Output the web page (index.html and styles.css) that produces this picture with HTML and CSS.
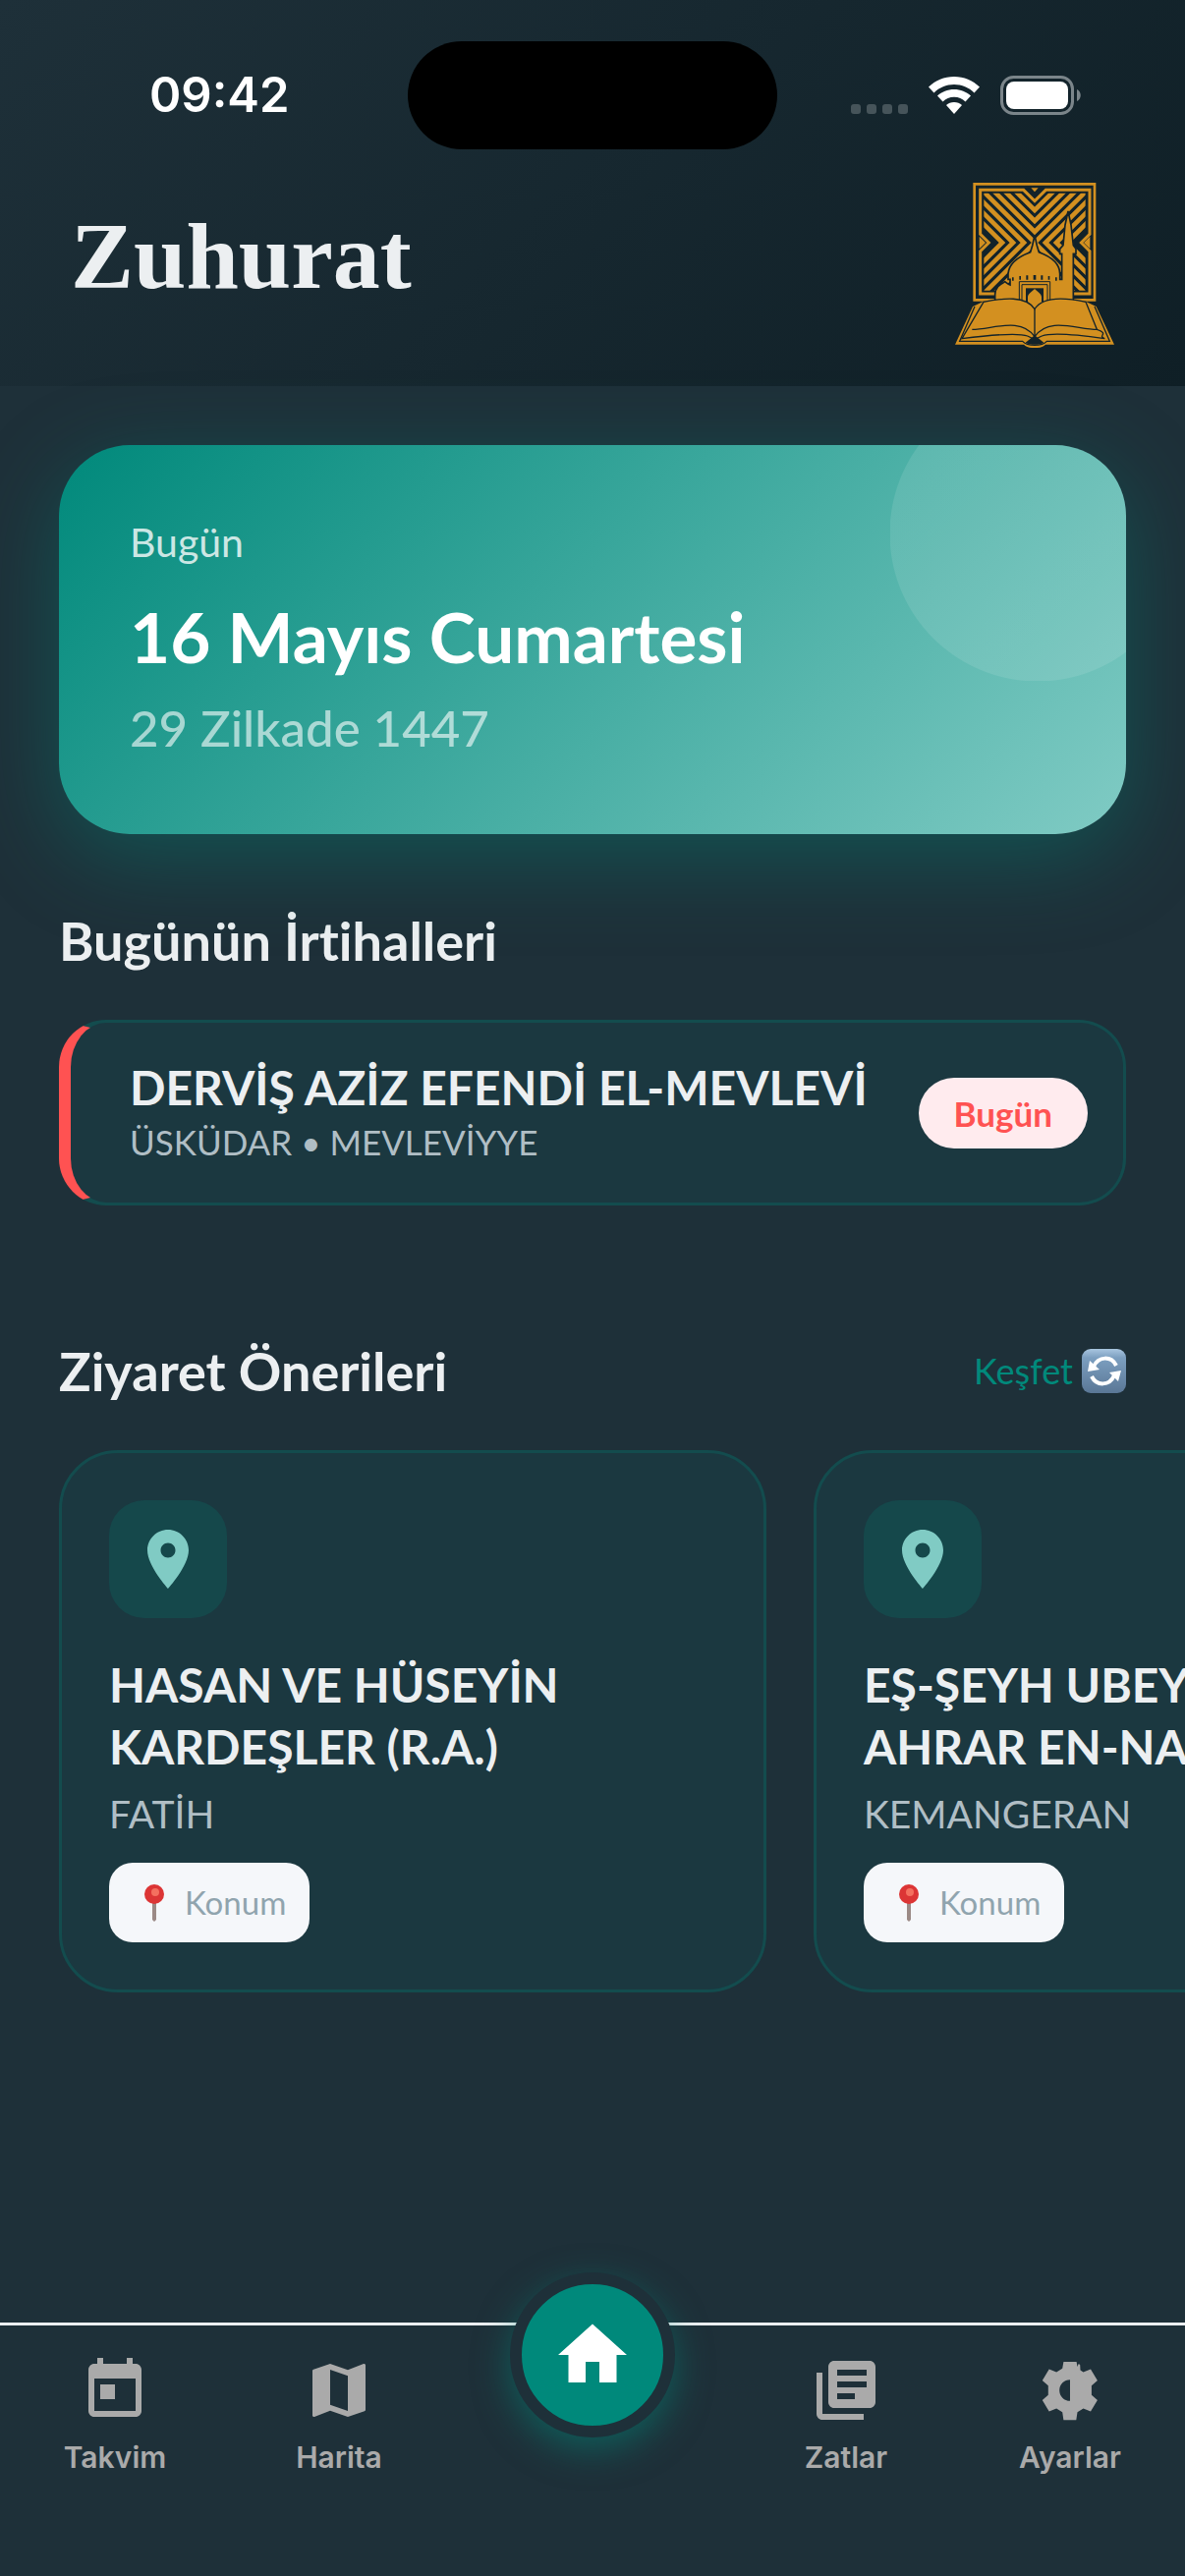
FILE: index.html
```html
<!DOCTYPE html>
<html lang="tr">
<head>
  <meta charset="UTF-8">
  <meta name="viewport" content="width=device-width, initial-scale=1">
  <title>Zuhurat</title>
  <link rel="stylesheet" href="styles.css">
</head>
<body>

<header class="header">
  <div class="status">
    <span class="time">09:42</span>
    <span class="island"></span>
    <div class="status-icons">
      <svg class="dots" viewBox="0 0 58 10" width="58" height="10">
        <rect width="10" height="10" rx="3"/>
        <rect x="16" width="10" height="10" rx="3"/>
        <rect x="32" width="10" height="10" rx="3"/>
        <rect x="48" width="10" height="10" rx="3"/>
      </svg>
      <svg class="wifi" viewBox="0 0 52 38" width="52" height="38">
        <path d="M26 0C16 0 7 4 0 10.500l5.500 6C11 11 18 8 26 8s15 3 20.500 8.500l5.500-6C45 4 36 0 26 0z"/>
        <path d="M26 13c-6.500 0-12.500 2.500-17 6.500l5.500 6c3-3 7-4.700 11.500-4.700s8.500 1.700 11.500 4.700l5.500-6C38.500 15.500 32.500 13 26 13z"/>
        <path d="M26 26c-3 0-6 1-8 3l8 9 8-9c-2-2-5-3-8-3z"/>
      </svg>
      <svg viewBox="0 0 82 40" width="82" height="40">
        <rect x="1.500" y="1.500" width="72" height="37" rx="12" fill="none" stroke="#7b858a" stroke-width="3"/>
        <rect x="6" y="6" width="63" height="28" rx="8" fill="#fff"/>
        <path d="M78 14c5 2 5 10 0 12z" fill="#7b858a"/>
      </svg>
    </div>
  </div>
  <div class="title-bar">
    <h1>Zuhurat</h1>
    <svg class="logo" viewBox="66 48 486 504" width="162" height="168">
      <defs>
        <clipPath id="inner"><path d="M154 80h310v297H154z"/></clipPath>
      </defs>
      <!-- frame -->
      <g fill="none" stroke="#d39020">
        <path stroke-width="8" d="M125 52h367v354H125z"/>
        <path stroke-width="9" d="M190 387H143V257l26-26-26-26V70h132l34 34 34-34h134v135l-26 26 26 26v130h-52"/>
        <!-- pattern -->
        <g stroke-width="14" clip-path="url(#inner)">
          <path d="M148 70l161 161L470 70M181 70l128 128L437 70M214 70l95 95 95-95M247 70l62 62 62-62"/>
          <path d="M148 103l128 128-128 128M148 136l95 95-95 95M148 169l62 62-62 62"/>
          <path d="M470 103L342 231l128 128M470 136l-95 95 95 95M470 169l-62 62 62 62"/>
          <path d="M148 392l161-161 161 161M181 392l128-128 128 128"/>
        </g>
      </g>
      <path d="M298 64h22l-11 12zM140 212l19 19-19 19zM478 212l-19 19 19 19z" fill="#d39020"/>
      <!-- mosque -->
      <g fill="#d39020" stroke="#13232a" stroke-width="5">
        <path d="M188 420v-30c0-22 14-31 30-40 6 4 10 8 16 10v-17h-6v-17c2-28 24-50 68-66l6-20 7-32 7 32 6 20c44 16 64 38 64 66v17h6v-78h-6v-15l10-11 6-62 9-42 9 42 7 62 8 11v15h-8v155z"/>
        <path d="M262 416v-66h94v66" stroke-width="3"/>
        <path d="M270 416v-57h78v57" stroke-width="3"/>
        <path d="M282 416v-46h54v46" fill="#13232a" stroke="none"/>
        <path d="M288 425v-28c0-10 13-17 21-25 8 8 21 15 21 25v28z" stroke="none"/>
      </g>
      <path d="M240 337h5v10h-5zM262 333h5v11h-5zM283 331h6v13h-6zM305 330h8v14h-8zM328 331h6v13h-6zM350 333h5v11h-5zM372 337h5v10h-5z" fill="#13232a"/>
      <!-- book -->
      <path d="M120 426L66 542h210c12 14 54 14 66 0h210l-55-116-30-14H150z" fill="#d39020"/>
      <g fill="#d39020" stroke="#13232a" stroke-width="4">
        <path d="M126 426L80 532h192c14 16 60 16 74 0h192l-46-106" fill="none"/>
        <path d="M153 412c60-12 130-20 156 22 26-42 100-34 156-22l34 84c40 14 0 18 24 28-70-10-160-20-192-8-14 6-18 8-22 14-4-6-8-8-22-14-32-12-122-2-200 8z"/>
        <path d="M118 496c62 0 148-40 191 22 43-62 129-22 191-22M309 434v84" fill="none"/>
      </g>
      <path d="M309 514l28 22c-14 8-42 8-56 0z" fill="#13232a"/>
    </svg>
  </div>
</header>

<main class="content">
  <section class="today">
    <p class="today-label">Bugün</p>
    <h2 class="today-date">16 Mayıs Cumartesi</h2>
    <p class="today-hijri">29 Zilkade 1447</p>
  </section>

  <section class="section">
    <div class="section-head">
      <h2>Bugünün İrtihalleri</h2>
    </div>
    <article class="event">
      <div>
        <h3>DERVİŞ AZİZ EFENDİ EL-MEVLEVİ</h3>
        <p>ÜSKÜDAR • MEVLEVİYYE</p>
      </div>
      <span class="badge">Bugün</span>
    </article>
  </section>

  <section class="section visits">
    <div class="section-head">
      <h2>Ziyaret Önerileri</h2>
      <button class="explore" type="button">
        Keşfet
        <svg viewBox="0 0 45 45" width="45" height="45">
          <defs>
            <linearGradient id="blue" x1="0" y1="0" x2="0" y2="1">
              <stop offset="0" stop-color="#a9c6e0"/>
              <stop offset=".2" stop-color="#7c9fc0"/>
              <stop offset="1" stop-color="#5a7796"/>
            </linearGradient>
          </defs>
          <rect width="45" height="45" rx="9" fill="url(#blue)"/>
          <g fill="none" stroke="#fff" stroke-width="4">
            <path d="M12 18c5-11 18-11 23-1M33 27c-5 11-18 11-23 1"/>
          </g>
          <path d="M8 12l-2 11 12-2zM37 33l3-11-12 2z" fill="#fff"/>
        </svg>
      </button>
    </div>
    <div class="cards">
      <article class="card">
        <div class="card-icon">
          <svg viewBox="0 0 24 24" width="72" height="72"><path d="M12 2C8.130 2 5 5.130 5 9c0 5.250 7 13 7 13s7-7.750 7-13c0-3.870-3.130-7-7-7zm0 9.500c-1.380 0-2.500-1.120-2.500-2.500s1.120-2.500 2.500-2.500 2.500 1.120 2.500 2.500-1.120 2.500-2.500 2.500z"/></svg>
        </div>
        <h3>HASAN VE HÜSEYİN KARDEŞLER (R.A.)</h3>
        <p>FATİH</p>
        <button class="place" type="button">
          <svg viewBox="0 0 22 38" width="22" height="38">
            <path d="M9 18h4v18l-2 2-2-2z" fill="#9b8a86"/>
            <circle cx="11" cy="10" r="10" fill="#dc3535"/>
            <circle cx="12" cy="8" r="4" fill="#f4705f"/>
          </svg>
          Konum
        </button>
      </article>
      <article class="card">
        <div class="card-icon">
          <svg viewBox="0 0 24 24" width="72" height="72"><path d="M12 2C8.130 2 5 5.130 5 9c0 5.250 7 13 7 13s7-7.750 7-13c0-3.870-3.130-7-7-7zm0 9.500c-1.380 0-2.500-1.120-2.500-2.500s1.120-2.500 2.500-2.500 2.500 1.120 2.500 2.500-1.120 2.500-2.500 2.500z"/></svg>
        </div>
        <h3>EŞ-ŞEYH UBEYDULLAH AHRAR EN-NAKŞİBENDİ</h3>
        <p>KEMANGERAN</p>
        <button class="place" type="button">
          <svg viewBox="0 0 22 38" width="22" height="38">
            <path d="M9 18h4v18l-2 2-2-2z" fill="#9b8a86"/>
            <circle cx="11" cy="10" r="10" fill="#dc3535"/>
            <circle cx="12" cy="8" r="4" fill="#f4705f"/>
          </svg>
          Konum
        </button>
      </article>
    </div>
  </section>
</main>

<nav class="tabs">
  <a href="#">
    <svg viewBox="0 0 24 24" width="72" height="72"><path d="M19 3h-1V1h-2v2H8V1H6v2H5c-1.110 0-1.990.9-1.990 2L3 19c0 1.100.89 2 2 2h14c1.100 0 2-.9 2-2V5c0-1.100-.9-2-2-2zm0 16H5V8h14v11zM7 10h5v5H7z"/></svg>
    Takvim
  </a>
  <a href="#">
    <svg viewBox="0 0 24 24" width="72" height="72"><path d="M20.500 3l-.16.030L15 5.100 9 3 3.360 4.900c-.21.070-.36.250-.36.480V20.500c0 .28.220.5.500.5l.16-.03L9 18.900l6 2.100 5.640-1.900c.21-.07.360-.25.360-.48V3.500c0-.28-.22-.5-.5-.5zM15 19l-6-2.110V5l6 2.110V19z"/></svg>
    Harita
  </a>
  <a href="#" class="home" aria-label="Ana sayfa">
    <svg viewBox="0 0 24 24" width="84" height="84"><path d="M10 20v-6h4v6h5v-8h3L12 3 2 12h3v8z"/></svg>
  </a>
  <a href="#">
    <svg viewBox="0 0 24 24" width="72" height="72"><path fill-rule="evenodd" d="M4 6H2v14c0 1.100.9 2 2 2h14v-2H4V6zm16-4H8c-1.100 0-2 .9-2 2v12c0 1.100.9 2 2 2h12c1.100 0 2-.9 2-2V4c0-1.100-.9-2-2-2zm-1 9H9V9h10v2zm-4 4H9v-2h6v2zm4-8H9V5h10v2z"/></svg>
    Zatlar
  </a>
  <a href="#">
    <svg viewBox="0 0 24 24" width="72" height="72"><path fill-rule="evenodd" d="M9.800 2.300h4.400l.3 1.700.4-1 .5.300.1 1.900 1 .600 2.500-1 2.300 3.900-2 1.700v3.200l2 1.700-2.300 3.900-2.500-1-2 1.200-.4 2.700H9.800l-.4-2.700-2-1.200-2.500 1-2.300-3.900 2-1.700v-3.200l-2-1.700 2.300-3.900 2.500 1 2-1.200zM12 8.400a3.600 3.600 0 0 0 0 7.200z"/></svg>
    Ayarlar
  </a>
</nav>

</body>
</html>
```
FILE: styles.css
```css
* {
  margin: 0;
  padding: 0;
  box-sizing: border-box;
}

body {
  min-height: 100vh;
  display: flex;
  flex-direction: column;
  background-color: #1e3039;
  color: #eceff1;
  font-family: Lato, sans-serif;
  font-variant-ligatures: none;
  overflow-x: hidden;
}

svg {
  display: block;
  flex: none;
}

.header {
  position: relative;
  padding: 42px 72px 39px;
  background: linear-gradient(135deg, #1e3039, #0f1f26);
}

.status {
  display: grid;
  grid-template-columns: 1fr 376px 1fr;
  align-items: center;
  height: 110px;
}

.time {
  padding-left: 80px;
  font: 600 49px/60px Inter, sans-serif;
  color: #fff;
}

.island {
  height: 110px;
  border-radius: 55px;
  background-color: #000;
}

.status-icons {
  display: flex;
  justify-content: flex-end;
  align-items: center;
  gap: 21px;
  padding-right: 34px;
}

.dots {
  margin-top: 28px;
  fill: #46545a;
}

.wifi {
  fill: #fff;
}

.title-bar {
  display: flex;
  justify-content: space-between;
  align-items: center;
  margin-top: 34px;
}

.title-bar h1 {
  padding-bottom: 18px;
  font: 700 96px/120px "Liberation Serif", serif;
}

.content {
  flex: 1;
  padding: 60px 60px 0;
}

.today {
  position: relative;
  padding: 72px;
  border-radius: 72px;
  background: linear-gradient(135deg, #00897b, #80cbc4);
  box-shadow: 0 24px 90px rgba(0, 137, 123, .4);
}

.today::after {
  content: "";
  position: absolute;
  top: 0;
  right: 0;
  width: 240px;
  height: 240px;
  border-radius: 0 72px 0 0;
  background: radial-gradient(circle at 150px 90px, rgba(255, 255, 255, .1) 150px, transparent 151px);
}

.today-label {
  font-size: 41px;
  line-height: 54px;
  color: rgba(255, 255, 255, .8);
}

.today-date {
  margin-top: 24px;
  font-size: 71px;
  line-height: 90px;
  color: #fff;
}

.today-hijri {
  margin-top: 12px;
  font-size: 51px;
  font-weight: 500;
  line-height: 72px;
  color: rgba(255, 255, 255, .6);
}

.section {
  margin-top: 72px;
}

.section-head {
  display: flex;
  justify-content: space-between;
  align-items: center;
  height: 72px;
  margin-bottom: 45px;
}

.section-head h2 {
  font-size: 54px;
  line-height: 69px;
}

.event {
  display: flex;
  justify-content: space-between;
  align-items: center;
  padding: 36px 36px 36px 60px;
  border: 3px solid #134c4e;
  border-left: 12px solid #ff5252;
  border-radius: 48px;
  background-color: #1b3840;
}

.event h3 {
  font-size: 48px;
  line-height: 60px;
}

.event p,
.card p {
  font-size: 39px;
  line-height: 51px;
  color: #b0bec5;
}

.event p {
  font-size: 35px;
}

.badge {
  padding: 12px 36px;
  border-radius: 36px;
  background-color: #ffebee;
  color: #ff5252;
  font-size: 35px;
  font-weight: 700;
  line-height: 48px;
}

.visits {
  margin-top: 132px;
}

.explore {
  display: flex;
  align-items: center;
  gap: 9px;
  border: 0;
  background: none;
  color: #00897b;
  font: 400 36px/45px Lato, sans-serif;
}

.cards {
  display: flex;
  gap: 48px;
  margin-right: -60px;
  overflow: hidden;
}

.card {
  flex: none;
  width: 720px;
  padding: 48px;
  border: 3px solid #134c4e;
  border-radius: 60px;
  background-color: #1b3840;
}

.card-icon {
  display: flex;
  align-items: center;
  justify-content: center;
  width: 120px;
  height: 120px;
  margin-bottom: 36px;
  border-radius: 36px;
  background-color: #15484b;
  fill: #80cbc4;
}

.card h3 {
  font-size: 48px;
  line-height: 63px;
}

.card p {
  margin: 12px 0 24px;
}

.place {
  display: flex;
  align-items: center;
  gap: 20px;
  padding: 18px 24px 18px 35px;
  border: 0;
  border-radius: 24px;
  background-color: #f5f7fa;
  color: #90a4ae;
  font: 400 33px/45px Lato, sans-serif;
}

.tabs {
  display: grid;
  grid-template-columns: 1fr 1fr 288px 1fr 1fr;
  height: 258px;
  padding: 30px 3px 0;
  border-top: 3px solid #eceff1;
}

.tabs a {
  display: flex;
  flex-direction: column;
  align-items: center;
  gap: 14px;
  color: #aaa;
  fill: #aaa;
  font: 600 30px/36px Inter, sans-serif;
  text-decoration: none;
}

.tabs .home {
  justify-content: center;
  justify-self: center;
  width: 168px;
  height: 168px;
  margin-top: -84px;
  border: 12px solid #1e3039;
  border-radius: 50%;
  background-color: #00897b;
  box-shadow: 0 12px 36px rgba(0, 137, 123, .5);
  fill: #fff;
}
```
